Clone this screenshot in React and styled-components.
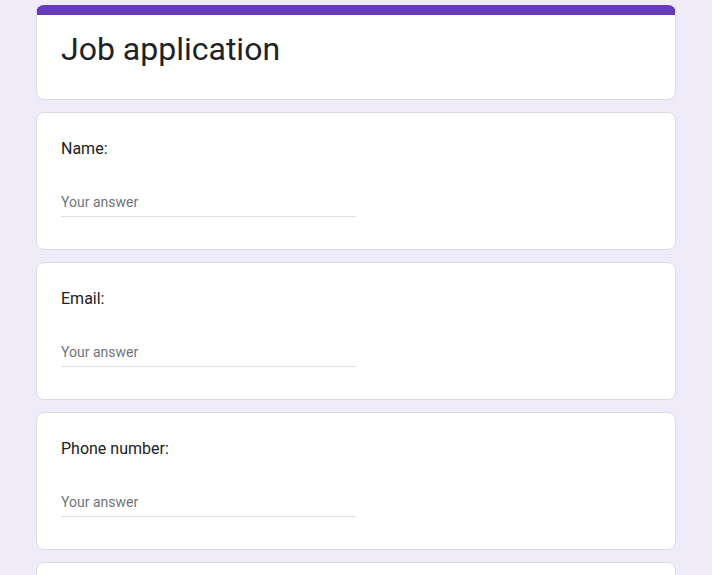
import React from "react";
import styled, { createGlobalStyle } from "styled-components";

const GlobalStyle = createGlobalStyle`
  html, body {
    margin: 0;
    padding: 0;
    background: #f0ebf8;
    font-family: Roboto, "Noto Sans", Arial, sans-serif;
  }
`;

const Page = styled.main`
  width: 640px;
  margin: 0 auto;
  padding: 5px 0 24px;
  display: flex;
  flex-direction: column;
  gap: 12px;
`;

const Card = styled.section`
  box-sizing: border-box;
  background: #fff;
  border: 1px solid #dadce0;
  border-top: ${(p) => (p.$accent ? "10px solid #673ab7" : "1px solid #dadce0")};
  border-radius: 8px;
  padding: ${(p) => (p.$accent ? "14px 24px 30px" : "24px")};
  display: flex;
  flex-direction: column;
`;

const Title = styled.h1`
  margin: 0;
  font-family: Roboto, "Noto Sans", Arial, sans-serif;
  font-size: 32px;
  line-height: 40px;
  font-weight: 400;
  color: #202124;
`;

const Label = styled.label`
  font-size: 16px;
  line-height: 24px;
  font-weight: 400;
  color: #202124;
`;

const Answer = styled.input`
  box-sizing: border-box;
  width: 50%;
  height: 27px;
  margin: 29px 0 8px;
  padding: 0 0 2px;
  border: none;
  border-bottom: 1px solid rgba(0, 0, 0, 0.12);
  outline: none;
  background: transparent;
  font-family: Roboto, "Noto Sans", Arial, sans-serif;
  font-size: 14px;
  line-height: 24px;
  color: #202124;
  &::placeholder {
    color: #70757a;
    opacity: 1;
  }
`;

const questions = ["Name:", "Email:", "Phone number:", "Address:"];

export default function App() {
  return (
    <>
      <GlobalStyle />
      <Page>
        <Card $accent>
          <Title>Job application</Title>
        </Card>
        {questions.map((q) => (
          <Card key={q}>
            <Label>{q}</Label>
            <Answer type="text" placeholder="Your answer" />
          </Card>
        ))}
      </Page>
    </>
  );
}
